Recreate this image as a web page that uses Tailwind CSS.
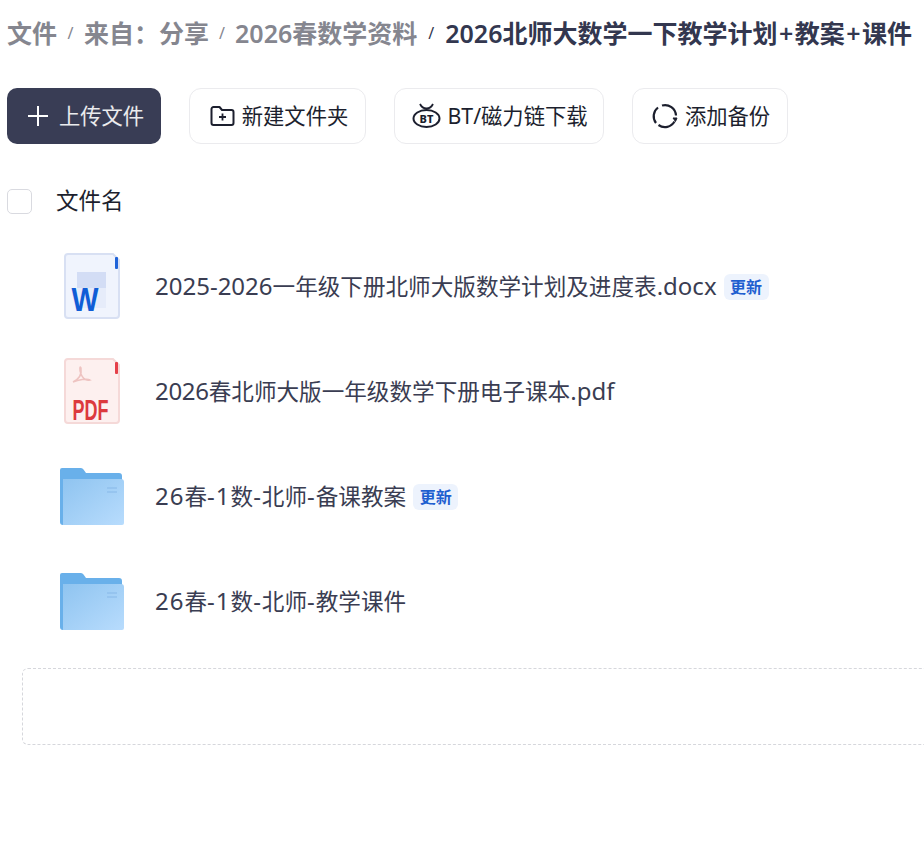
<!DOCTYPE html>
<html lang="zh-CN">
<head>
<meta charset="utf-8">
<script src="https://cdn.jsdelivr.net/npm/@tailwindcss/browser@4"></script>
</head>
<body class="bg-white overflow-hidden font-['Noto_Sans','Noto_Sans_CJK_SC',sans-serif]">
<div class="w-[924px] h-[845px] overflow-hidden relative">
  <nav class="flex items-center h-[34px] mt-4 pl-[7px] text-[25px] leading-[34px] font-semibold whitespace-nowrap text-[#85868f]">
    <span>文件</span><span class="w-[27px] text-center text-[16px] font-normal">/</span>
    <span>来自：分享</span><span class="w-[26px] text-center text-[16px] font-normal">/</span>
    <span>2026春数学资料</span><span class="w-[28px] text-center text-[16px] font-normal text-[#33374f]">/</span>
    <span class="text-[#33374f]">2026北师大数学一下教学计划<span class="px-[1.500px]">+</span>教案<span class="px-[1.500px]">+</span>课件</span>
  </nav>
  <div class="flex gap-[28px] mt-[38px] ml-[7px] text-[21.300px] text-[#1c1f2e]">
    <button class="h-[56px] w-[154px] rounded-[10px] bg-[#393d55] text-white/90 flex items-center justify-center gap-[10px] pl-[3px]">
      <svg width="22" height="22" viewBox="0 0 22 22" fill="none" stroke="white" stroke-width="2"><path d="M11 1v20M1 11h20"/></svg>
      <span>上传文件</span>
    </button>
    <button class="h-[56px] w-[177px] rounded-[12px] border border-[#ebebee] flex items-center justify-center gap-[7px] pl-[3px]">
      <svg width="25" height="22" viewBox="0 0 25 22" fill="none" stroke="#1c1f2e" stroke-width="2" stroke-linejoin="round"><path d="M1.500 4a2 2 0 0 1 2-2h6l2.500 3h9.500a2 2 0 0 1 2 2v11a2 2 0 0 1-2 2h-18a2 2 0 0 1-2-2z"/><path d="M12.500 8.500v7M9 12h7" stroke-width="1.800"/></svg>
      <span>新建文件夹</span>
    </button>
    <button class="h-[56px] w-[210px] rounded-[12px] border border-[#ebebee] flex items-center justify-center gap-[6px] pl-[2px]">
      <svg width="29" height="26" viewBox="0 0 29 26" fill="none" stroke="#1c1f2e" stroke-width="2"><ellipse cx="14.500" cy="15.500" rx="13" ry="8.500"/><path d="M8 1c1.500 3 3.500 4.500 6.500 4.500S19.500 4 21 1" stroke-width="1.800"/><text x="14.500" y="19.500" text-anchor="middle" font-size="11" font-weight="800" fill="#1c1f2e" stroke="none" font-family="Noto Sans">BT</text></svg>
      <span>BT/磁力链下载</span>
    </button>
    <button class="h-[56px] w-[156px] rounded-[12px] border border-[#ebebee] flex items-center justify-center gap-[7px] pl-[2px]">
      <svg width="26" height="26" viewBox="0 0 26 26" fill="none" stroke="#1c1f2e" stroke-width="2.200"><path d="M10 2.500A11 11 0 0 1 24 12.500"/><path d="M22.500 18.500A11 11 0 0 1 6.500 22"/><path d="M4 20A11 11 0 0 1 6 4.500"/><path d="M21 15l2.500 3.500 1.500-3.500z" fill="#1c1f2e" stroke-width="1"/></svg>
      <span>添加备份</span>
    </button>
  </div>
  <div class="flex items-center h-[34px] mt-[40px] ml-[7px] gap-[24px] text-[22.500px] text-[#1c1f2e]">
    <span class="w-[25px] h-[25px] rounded-[5px] border border-[#d9dae0] bg-white"></span>
    <span>文件名</span>
  </div>
  <ul class="mt-[16px] text-[24px] leading-[34px] text-[#3a3d52]">
    <li class="h-[105px] flex items-center">
      <span class="w-[155px] flex pl-[62px] shrink-0">
        <svg width="60" height="68" viewBox="0 0 60 68" class="shrink-0 overflow-visible">
          <path d="M6 1h45l6 6v55a3 3 0 0 1-3 3H6a3 3 0 0 1-3-3V4a3 3 0 0 1 3-3z" fill="#f0f4fd" stroke="#d8e0f3" stroke-width="2"/>
          <rect x="15" y="19" width="29" height="36" fill="#e6ecfa"/><rect x="15" y="19" width="29" height="16" fill="#d3ddf5"/>
          <rect x="53" y="4" width="3" height="12" rx="1" fill="#1f63d8"/>
          <text x="23" y="58" text-anchor="middle" font-size="33" font-weight="800" fill="#0f5dd6" font-family="Liberation Sans" textLength="27" lengthAdjust="spacingAndGlyphs">W</text>
        </svg>
      </span>
      <span class="whitespace-nowrap">2025-2026<span class="text-[22.600px]">一年级下册北师大版数学计划及进度表</span>.docx</span>
      <span class="ml-[7px] w-[45px] h-[26px] rounded-[6px] bg-[#edf3fd] text-[#1f5fd0] text-[16px] font-semibold leading-[26px] text-center">更新</span>
    </li>
    <li class="h-[105px] flex items-center">
      <span class="w-[155px] flex pl-[62px] shrink-0">
        <svg width="60" height="68" viewBox="0 0 60 68" class="shrink-0 overflow-visible">
          <path d="M6 1h45l6 6v55a3 3 0 0 1-3 3H6a3 3 0 0 1-3-3V4a3 3 0 0 1 3-3z" fill="#fdf0ef" stroke="#f5d9d8" stroke-width="2"/>
          <rect x="53" y="4" width="3" height="12" rx="1" fill="#e5404a"/>
          <path d="M11 24c6-3 9-8 8-14-1-3-2 1 0 6s5 7 9 6c-3-2-12 0-17 2z" fill="none" stroke="#eec3c1" stroke-width="1.500"/>
          <text x="28.500" y="62" text-anchor="middle" font-size="30" font-weight="700" fill="#dc3a3e" font-family="Liberation Sans" textLength="36" lengthAdjust="spacingAndGlyphs">PDF</text>
        </svg>
      </span>
      <span class="whitespace-nowrap"><span class="tracking-[-0.300px]">2026</span><span class="text-[22.600px]">春北师大版一年级数学下册电子课本</span>.pdf</span>
    </li>
    <li class="h-[105px] flex items-center">
      <span class="w-[155px] flex pl-[60px] shrink-0">
        <svg width="64" height="60" viewBox="0 0 64 60" class="shrink-0">
          <defs><linearGradient id="fa" x1="0" y1="0" x2="1" y2="1"><stop offset="0" stop-color="#8fc4f0"/><stop offset="1" stop-color="#b8dcfd"/></linearGradient></defs>
          <path d="M2 1h19a3 3 0 0 1 2.500 1.500L26 6h33a3 3 0 0 1 3 3v46a3 3 0 0 1-3 3H3a3 3 0 0 1-3-3V3a2 2 0 0 1 2-2z" fill="#69b0ea"/>
          <path d="M3 12h58a3 3 0 0 1 3 3v41a2 2 0 0 1-2 2H3z" fill="url(#fa)"/>
          <path d="M47 21h10M47 25h10" stroke="#87b8e8" stroke-width="1"/>
        </svg>
      </span>
      <span class="whitespace-nowrap"><span class="tracking-[1px]">26</span><span class="text-[22.600px]">春</span><span class="tracking-[1px]">-1</span><span class="text-[22.600px]">数</span><span class="tracking-[1px]">-</span><span class="text-[22.600px]">北师</span><span class="tracking-[1px]">-</span><span class="text-[22.600px]">备课教案</span></span>
      <span class="ml-[7px] w-[45px] h-[26px] rounded-[6px] bg-[#edf3fd] text-[#1f5fd0] text-[16px] font-semibold leading-[26px] text-center">更新</span>
    </li>
    <li class="h-[105px] flex items-center">
      <span class="w-[155px] flex pl-[60px] shrink-0">
        <svg width="64" height="60" viewBox="0 0 64 60" class="shrink-0">
          <defs><linearGradient id="fb" x1="0" y1="0" x2="1" y2="1"><stop offset="0" stop-color="#8fc4f0"/><stop offset="1" stop-color="#b8dcfd"/></linearGradient></defs>
          <path d="M2 1h19a3 3 0 0 1 2.500 1.500L26 6h33a3 3 0 0 1 3 3v46a3 3 0 0 1-3 3H3a3 3 0 0 1-3-3V3a2 2 0 0 1 2-2z" fill="#69b0ea"/>
          <path d="M3 12h58a3 3 0 0 1 3 3v41a2 2 0 0 1-2 2H3z" fill="url(#fb)"/>
          <path d="M47 21h10M47 25h10" stroke="#87b8e8" stroke-width="1"/>
        </svg>
      </span>
      <span class="whitespace-nowrap"><span class="tracking-[1px]">26</span><span class="text-[22.600px]">春</span><span class="tracking-[1px]">-1</span><span class="text-[22.600px]">数</span><span class="tracking-[1px]">-</span><span class="text-[22.600px]">北师</span><span class="tracking-[1px]">-</span><span class="text-[22.600px]">教学课件</span></span>
    </li>
  </ul>
  <div class="ml-[22px] mt-[14px] w-[1000px] h-[77px] rounded-[6px] border border-dashed border-[#d6d7dc]"></div>
</div>
</body>
</html>
